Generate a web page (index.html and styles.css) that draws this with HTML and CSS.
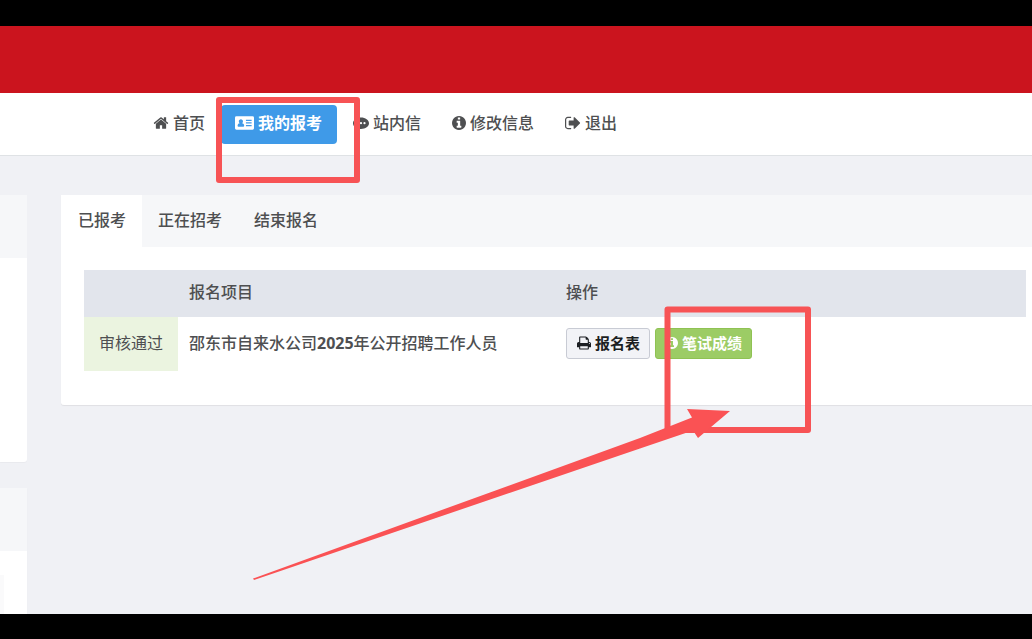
FILE: index.html
```html
<!DOCTYPE html>
<html lang="zh-CN">
<head>
<meta charset="utf-8">
<meta name="viewport" content="width=device-width, initial-scale=1">
<title>我的报考</title>
<link rel="stylesheet" href="styles.css">
</head>
<body>
<svg class="sprite" aria-hidden="true">
  <symbol id="home" viewBox="0 0 1792 1792"><path d="M1472 992v480q0 26-19 45t-45 19h-384v-384h-256v384h-384q-26 0-45-19t-19-45v-480q0-1 .5-3t.5-3l575-474 575 474q1 2 1 6zm223-69l-62 74q-8 9-21 11h-3q-13 0-21-7l-692-577-692 577q-12 8-24 7-13-2-21-11l-62-74q-8-10-7-23.5t11-21.5l719-599q32-26 76-26t76 26l244 204v-195q0-14 9-23t23-9h192q14 0 23 9t9 23v408l219 182q10 8 11 21.5t-7 23.5z"/></symbol>
  <symbol id="card" viewBox="0 0 20 16"><path fill-rule="evenodd" d="M1.500 1h17A1.500 1.500 0 0 1 20 2.500v11a1.500 1.500 0 0 1-1.500 1.500h-17A1.500 1.500 0 0 1 0 13.500v-11A1.500 1.500 0 0 1 1.500 1zM6.200 4C4.900 4 4 5 4 6.300c0 .8.400 1.600 1 2C3.500 8.500 2.700 9.600 2.700 11c0 .6.400 1 1 1h5c.6 0 1-.4 1-1 0-1.400-.8-2.500-2.300-2.700.6-.4 1-1.200 1-2C8.400 5 7.500 4 6.200 4zM11.500 4.500v1.300h6V4.500zM11.500 7.300v1.300h6V7.300zM11.500 10.200v1.300h6v-1.300z"/></symbol>
  <symbol id="comment" viewBox="0 0 16 16"><path fill-rule="evenodd" d="M8 2.500c4.400 0 8 2.500 8 5.700s-3.600 5.700-8 5.700c-.7 0-1.300-.1-1.900-.2C4.500 14.900 2.800 15.400 1.200 15.500c.8-.9 1.300-1.700 1.500-2.900C1 11.500 0 9.900 0 8.200c0-3.200 3.600-5.700 8-5.700zM4.500 7.100a1.100 1.100 0 1 0 0 2.200 1.100 1.100 0 0 0 0-2.200zm3.500 0a1.100 1.100 0 1 0 0 2.200 1.100 1.100 0 0 0 0-2.200zm3.500 0a1.100 1.100 0 1 0 0 2.200 1.100 1.100 0 0 0 0-2.200z"/></symbol>
  <symbol id="info" viewBox="128 128 1536 1536"><path d="M1152 1376v-160q0-14-9-23t-23-9h-96v-512q0-14-9-23t-23-9h-320q-14 0-23 9t-9 23v160q0 14 9 23t23 9h96v320h-96q-14 0-23 9t-9 23v160q0 14 9 23t23 9h448q14 0 23-9t9-23zm-128-896v-160q0-14-9-23t-23-9h-192q-14 0-23 9t-9 23v160q0 14 9 23t23 9h192q14 0 23-9t9-23zm640 416q0 209-103 385.500t-279.500 279.500-385.500 103-385.500-103-279.500-279.500-103-385.500 103-385.500 279.500-279.500 385.500-103 385.500 103 279.500 279.500 103 385.500z"/></symbol>
  <symbol id="out" viewBox="64 64 1664 1664"><path d="M704 1440q0 4 1 20t.5 26.500-3 23.500-10 19.500-20.500 6.500h-320q-119 0-203.500-84.500t-84.500-203.500v-704q0-119 84.500-203.500t203.500-84.500h320q13 0 22.500 9.500t9.500 22.500q0 4 1 20t.5 26.500-3 23.500-10 19.500-20.500 6.500h-320q-66 0-113 47t-47 113v704q0 66 47 113t113 47h312l11.500 1 11.500 3 8 5.500 7 9 2 13.500zm928-544q0 26-19 45l-544 544q-19 19-45 19t-45-19-19-45v-288h-448q-26 0-45-19t-19-45v-384q0-26 19-45t45-19h448v-288q0-26 19-45t45-19 45 19l544 544q19 19 19 45z"/></symbol>
  <symbol id="print" viewBox="64 64 1664 1664"><path d="M448 1536h896v-256h-896v256zm0-640h896v-384h-160q-40 0-68-28t-28-68v-160h-640v640zm1152 64q0-26-19-45t-45-19-45 19-19 45 19 45 45 19 45-19 19-45zm128 0v416q0 13-9.500 22.500t-22.500 9.500h-224v160q0 40-28 68t-68 28h-960q-40 0-68-28t-28-68v-160h-224q-13 0-22.500-9.500t-9.500-22.500v-416q0-79 56.500-135.500t135.500-56.500h64v-544q0-40 28-68t68-28h672q40 0 88 20t76 48l152 152q28 28 48 76t20 88v256h64q79 0 135.500 56.500t56.500 135.500z"/></symbol>
</svg>
<header class="banner"></header>
<nav class="nav">
  <a class="nav-link" href="#"><svg class="icon"><use href="#home"/></svg>首页</a>
  <a class="nav-link active" href="#"><svg class="icon wide"><use href="#card"/></svg>我的报考</a>
  <a class="nav-link" href="#"><svg class="icon"><use href="#comment"/></svg>站内信</a>
  <a class="nav-link" href="#"><svg class="icon small"><use href="#info"/></svg>修改信息</a>
  <a class="nav-link" href="#"><svg class="icon"><use href="#out"/></svg>退出</a>
</nav>
<main class="main">
  <aside class="side">
    <section class="block"><div class="block-head"></div><div class="block-body"></div></section>
    <section class="block grow"><div class="block-head"></div><div class="block-body"><div class="side-item"></div></div></section>
  </aside>
  <section class="panel">
    <div class="tabs" role="tablist">
      <button class="tab selected" type="button" role="tab" aria-selected="true">已报考</button>
      <button class="tab" type="button" role="tab" aria-selected="false">正在招考</button>
      <button class="tab" type="button" role="tab" aria-selected="false">结束报名</button>
    </div>
    <div class="panel-body">
      <table class="table">
        <thead>
          <tr><th class="col-status"></th><th class="col-name">报名项目</th><th>操作</th></tr>
        </thead>
        <tbody>
          <tr>
            <td class="status">审核通过</td>
            <td class="name">邵东市自来水公司<b>2025</b>年公开招聘工作人员</td>
            <td>
              <div class="actions">
                <button class="btn" type="button"><svg class="icon small"><use href="#print"/></svg>报名表</button>
                <button class="btn green" type="button"><svg class="icon tiny"><use href="#info"/></svg>笔试成绩</button>
              </div>
            </td>
          </tr>
        </tbody>
      </table>
    </div>
  </section>
</main>
<svg class="marks" aria-hidden="true">
  <g fill="none" stroke="#f75355" stroke-width="6" stroke-linejoin="round">
    <rect x="219" y="100" width="138" height="80"/>
    <rect x="667.500" y="309.500" width="140.500" height="120.500"/>
  </g>
  <path fill="#fa5254" d="M253 578.500L640 438L692 417.500L687 409L730 411L698 438L693 430.500L640 448.500L254 580z"/>
</svg>
</body>
</html>
```
FILE: styles.css
```css
* {
  box-sizing: border-box;
}

body {
  display: flex;
  flex-direction: column;
  min-height: 100vh;
  margin: 0;
  border-top: 26px solid #000;
  border-bottom: 25px solid #000;
  background: #f0f1f5;
  color: #4e4f51;
  font: 500 16px/24px "Open Sans", "Noto Sans CJK SC", sans-serif;
  overflow-x: hidden;
}

button {
  font: inherit;
  color: inherit;
}

.sprite {
  position: absolute;
  width: 0;
  height: 0;
}

.icon {
  flex: none;
  width: 16px;
  height: 16px;
  fill: currentColor;
}

.icon.wide {
  width: 19px;
}

.icon.small {
  width: 14px;
  height: 14px;
}

.icon.tiny {
  width: 12px;
  height: 12px;
}

.banner {
  height: 67px;
  background: #cb141e;
}

.nav {
  display: flex;
  align-items: center;
  gap: 1px;
  height: 63px;
  padding-left: 138px;
  border-bottom: 1px solid #dfe2e5;
  background: #fff;
}

.nav-link {
  display: flex;
  align-items: center;
  gap: 4px;
  height: 39px;
  padding: 0 15px 2px;
  border-radius: 4px;
  color: inherit;
  text-decoration: none;
}

.nav-link.active {
  padding: 0 15px 2px 14px;
  background: #3f9ae8;
  color: #fff;
  font-weight: 700;
}

.main {
  display: flex;
  flex: 1;
  align-items: flex-start;
  gap: 34px;
  padding-top: 39px;
}

.side {
  display: flex;
  flex: 0 0 27px;
  flex-direction: column;
  align-self: stretch;
  gap: 26px;
}

.block {
  display: flex;
  flex-direction: column;
  border-radius: 0 3px 3px 0;
  background: #fff;
  box-shadow: 0 1px 1px rgba(0, 0, 0, 0.03);
}

.block.grow {
  flex: 1;
  border-radius: 0;
}

.block-head {
  height: 63px;
  background: #f6f7f9;
}

.block-body {
  min-height: 62px;
}

.block:first-child .block-body {
  height: 204px;
}

.grow .block-body {
  display: flex;
  flex: 1;
  padding-top: 24px;
}

.side-item {
  width: 4px;
  background: #fafafb;
}

.panel {
  flex: 1;
  min-width: 0;
  border-left: 1px solid #fff;
  border-radius: 0 0 0 3px;
  background: #fff;
  box-shadow: 0 1px 1px rgba(0, 0, 0, 0.07);
}

.tabs {
  display: flex;
  background: #f6f7f9;
}

.tab {
  height: 52px;
  padding: 0 16px 2px;
  border: 0;
  background: none;
}

.tab.selected {
  background: #fff;
}

.panel-body {
  padding: 23px 6px 34px 22px;
}

.table {
  width: 100%;
  border-collapse: collapse;
  table-layout: fixed;
}

.table th,
.table td {
  padding: 0 11px 2px;
  text-align: left;
  font-weight: 500;
}

.table th {
  height: 47px;
  padding-bottom: 4px;
  background: #e2e5ec;
}

.table .col-status {
  width: 94px;
}

.table .col-name {
  width: 377px;
}

.table td {
  height: 54px;
}

.table .status {
  padding: 0 0 2px;
  background: #ebf4e0;
  text-align: center;
  font-weight: 400;
}

.actions {
  display: flex;
  gap: 5px;
}

.btn {
  display: flex;
  align-items: center;
  gap: 4px;
  height: 31px;
  padding: 0 9px 0 10px;
  border: 1px solid #c8cbd4;
  border-radius: 3px;
  background: #f2f3f7;
  color: #1c1f23;
  font-size: 15px;
  font-weight: 700;
}

.btn.green {
  border-color: #8fc253;
  background: #9ccc65;
  color: #fff;
}

.marks {
  position: absolute;
  top: 0;
  left: 0;
  width: 100%;
  height: 100%;
  pointer-events: none;
}
```
